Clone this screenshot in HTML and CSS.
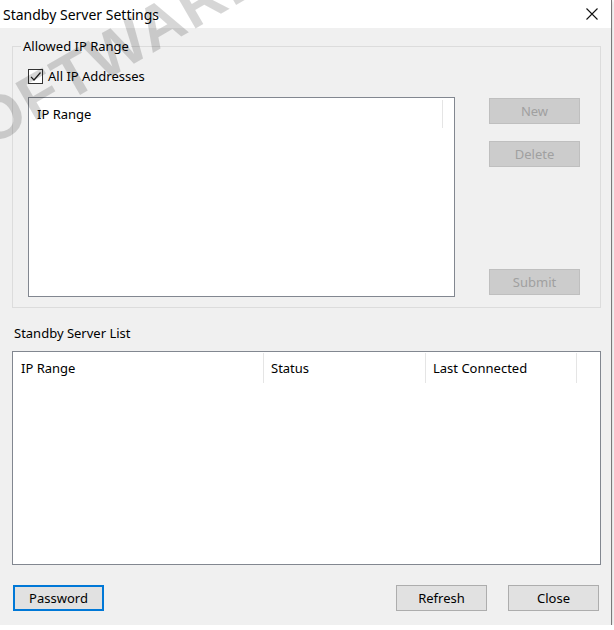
FILE: index.html
```html
<!DOCTYPE html>
<html lang="en">
<head>
    <meta charset="UTF-8">
    <title>Standby Server Settings</title>
    <link rel="stylesheet" href="styles.css">
</head>
<body>

    <div class="window">
        <div class="titlebar">
            <span class="title">Standby Server Settings</span>
            <svg class="close-icon" width="12" height="12" viewBox="0 0 12 12">
                <path d="M0.5 0.5 L11.5 11.5 M11.5 0.5 L0.5 11.5" stroke="#111" stroke-width="1.1" fill="none"/>
            </svg>
        </div>

        <div class="dialog">
            <!-- Allowed IP range group -->
            <fieldset class="group">
                <legend>Allowed IP Range</legend>
                <label class="check-row">
                    <span class="checkbox">
                        <svg width="13" height="13" viewBox="0 0 13 13">
                            <path d="M2 6.8 L5 10 L11.5 2.5" stroke="#222" stroke-width="1.2" fill="none"/>
                        </svg>
                    </span>
                    All IP Addresses
                </label>
                <div class="group-body">
                    <div class="listbox">
                        <div class="list-header">
                            <span class="col col-range">IP Range</span>
                        </div>
                    </div>
                    <div class="side-buttons">
                        <button class="btn" disabled>New</button>
                        <button class="btn" disabled>Delete</button>
                        <button class="btn btn-submit" disabled>Submit</button>
                    </div>
                </div>
            </fieldset>

            <!-- Standby server list -->
            <div class="section-label">Standby Server List</div>
            <div class="listview">
                <div class="list-header">
                    <span class="col col-ip">IP Range</span>
                    <span class="col col-status">Status</span>
                    <span class="col col-last">Last Connected</span>
                </div>
            </div>

            <div class="footer">
                <button class="btn btn-default">Password</button>
                <div class="footer-right">
                    <button class="btn">Refresh</button>
                    <button class="btn">Close</button>
                </div>
            </div>
        </div>

        <div class="watermark">SOFTWARE</div>
    </div>

</body>
</html>
```

FILE: styles.css
```css
* {
    margin: 0;
    padding: 0;
    box-sizing: border-box;
}

body {
    background: #fff;
    font-family: "Noto Sans", "Open Sans", sans-serif;
    font-size: 13px;
    color: #000;
}

.window {
    position: relative;
    width: 612px;
    height: 625px;
    background: #f0f0f0;
    border-right: 1px solid #7a7a7a;
    box-shadow: 0 1px 4px rgba(0, 0, 0, 0.25);
    overflow: hidden;
}

.titlebar {
    height: 28px;
    background: #fff;
    display: flex;
    align-items: center;
    justify-content: space-between;
    padding: 0 13px 0 3px;
}

.title {
    font-size: 14px;
}

.dialog {
    display: flex;
    flex-direction: column;
    padding: 0 10px 0 12px;
}

/* group box */
.group {
    margin-top: 10px;
    border: 1px solid #dcdcdc;
    padding: 14px 20px 10px 15px;
}

.group legend {
    margin-left: -7px;
    padding: 0 2px;
    line-height: 16px;
}

.check-row {
    display: flex;
    align-items: center;
    gap: 5px;
    height: 16px;
}

.checkbox {
    width: 15px;
    height: 15px;
    border: 1px solid #333;
    background: #fff;
    display: flex;
    align-items: center;
    justify-content: center;
}

.group-body {
    display: flex;
    justify-content: space-between;
    height: 200px;
    margin-top: 13px;
}

.listbox {
    width: 427px;
    background: #fff;
    border: 1px solid #828790;
}

.list-header {
    display: flex;
}

.col {
    display: block;
    border-right: 1px solid #e5e5e5;
    padding-left: 7px;
}

.listbox .col {
    width: 414px;
    height: 28px;
    line-height: 28px;
    margin-top: 2px;
    padding-left: 8px;
}

.side-buttons {
    display: flex;
    flex-direction: column;
    gap: 17px;
    padding: 1px 0 2px;
}

.btn {
    width: 91px;
    height: 26px;
    font-family: inherit;
    font-size: 13px;
    color: #000;
    background: #e1e1e1;
    border: 1px solid #adadad;
}

.btn:disabled {
    background: #cccccc;
    border-color: #bfbfbf;
    color: #a0a0a0;
}

.btn-submit {
    margin-top: auto;
}

.btn-default {
    border: 2px solid #0078d7;
}

.section-label {
    margin-top: 17px;
    line-height: 16px;
    padding-left: 2px;
}

/* server list view */
.listview {
    margin-top: 10px;
    height: 214px;
    background: #fff;
    border: 1px solid #828790;
}

.listview .col {
    height: 30px;
    line-height: 30px;
    margin-top: 1px;
}

.col-ip {
    width: 251px;
    padding-left: 8px;
}

.col-status {
    width: 162px;
}

.col-last {
    width: 151px;
}

.footer {
    display: flex;
    justify-content: space-between;
    margin-top: 20px;
    padding: 0 2px 0 1px;
}

.footer-right {
    display: flex;
    gap: 21px;
}

/* diagonal watermark across the top-left corner */
.watermark {
    position: absolute;
    left: -74px;
    top: 124px;
    transform: rotate(-30deg);
    transform-origin: 0 0;
    font-family: "Liberation Sans", sans-serif;
    font-weight: bold;
    font-size: 62px;
    line-height: 1;
    letter-spacing: 2px;
    white-space: nowrap;
    color: rgba(0, 0, 0, 0.16);
    pointer-events: none;
}
```
